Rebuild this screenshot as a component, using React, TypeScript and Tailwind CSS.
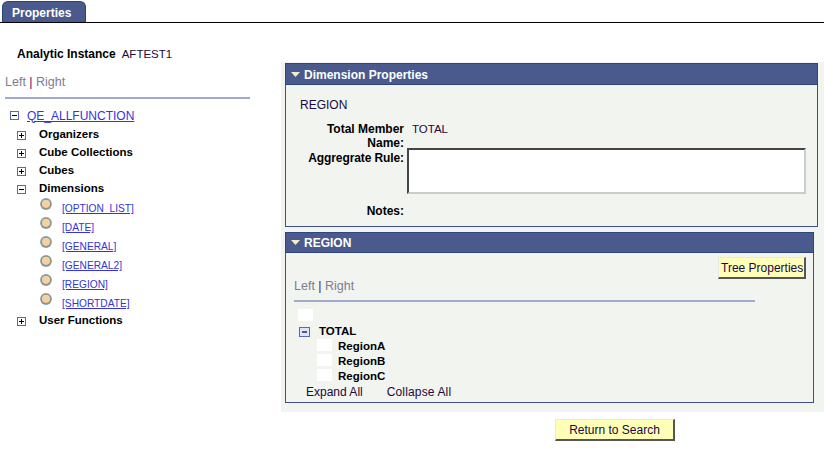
import React from 'react';

const font = { fontFamily: '"Liberation Sans", Arial, sans-serif' };

function TreeBox({ open, className = '' }: { open: boolean; className?: string }) {
  return (
    <svg width="9" height="9" viewBox="0 0 9 9" className={`block shrink-0 ${className}`}>
      <rect x="0.5" y="0.5" width="8" height="8" fill="#fff" stroke="#5a68ac" />
      <path d={open ? 'M2 4.5h5' : 'M2 4.5h5M4.5 2v5'} stroke="#000" fill="none" />
    </svg>
  );
}

function Ball() {
  return (
    <svg width="12" height="12" viewBox="0 0 12 12" className="block shrink-0">
      <circle cx="6" cy="6" r="5.9" fill="#7aa3bf" />
      <circle cx="6" cy="6" r="5" fill="#a88a5e" />
      <circle cx="6" cy="5.8" r="4.1" fill="#efd2a8" />
    </svg>
  );
}

function Branch({ label, open = false }: { label: string; open?: boolean }) {
  return (
    <div className="flex h-[18px] items-center pl-[17px]">
      <TreeBox open={open} />
      <span className="ml-[13px] text-[11.5px] font-bold text-black">{label}</span>
    </div>
  );
}

function Dim({ label }: { label: string }) {
  return (
    <div className="flex h-[19px] pl-[40px]">
      <Ball />
      <a className="ml-[10px] mt-[4px] text-[10.2px] leading-[13px] text-[#3434d8] underline">{label}</a>
    </div>
  );
}

function SectionHead({ title, className = '' }: { title: string; className?: string }) {
  return (
    <div className={`flex items-center border border-[#2f4480] bg-[#4a5a8c] pl-[5px] ${className}`}>
      <svg width="9" height="5" viewBox="0 0 9 5" className="block shrink-0">
        <path d="M0 0h9L4.5 5z" fill="#f4eec8" />
      </svg>
      <span className="ml-[4px] text-[12px] font-bold text-white">{title}</span>
    </div>
  );
}

function PsButton({ label, className = '' }: { label: string; className?: string }) {
  return (
    <button
      type="button"
      className={`flex h-[22px] items-center overflow-hidden whitespace-nowrap border border-t-[#e8e8e8] border-l-[#e8e8e8] border-r-[2px] border-b-[2px] border-r-[#555] border-b-[#555] bg-[#ffffb8] text-[12px] text-[#200840] ${className}`}
    >
      {label}
    </button>
  );
}

function LeftRight() {
  return (
    <div className="text-[12.5px] leading-[14px] text-[#7d7d92]">
      Left <span className="text-[#50106e]">|</span> Right
    </div>
  );
}

function Member({ label }: { label: string }) {
  return (
    <div className="flex h-[15px] items-center pl-[31px]">
      <div className="h-[12px] w-[15px] shrink-0 self-start bg-white" />
      <span className="ml-[6px] text-[11.5px] font-bold text-black">{label}</span>
    </div>
  );
}

export default function App() {
  return (
    <div style={font} className="h-[449px] w-[824px] overflow-hidden bg-white">
      {/* tab strip */}
      <div className="h-[23px] border-b border-black pl-[2px] pt-[1px]">
        <div className="flex h-[21px] w-[84px] items-center rounded-t-[6px] border border-b-0 border-[#2f3f70] bg-[#4a5a8c] pl-[9px] pt-[2px] text-[12px] font-bold text-white">
          Properties
        </div>
      </div>

      <div className="flex">
        {/* left tree */}
        <div className="w-[281px] shrink-0">
          <div className="flex items-center pl-[17px] pt-[24px]">
            <span className="text-[12px] font-bold leading-[14px] text-black">Analytic Instance</span>
            <span className="ml-[6px] text-[11.5px] leading-[14px] text-[#200840]">AFTEST1</span>
          </div>
          <div className="pl-[5px] pt-[14px]">
            <LeftRight />
          </div>
          <div className="ml-[5px] mt-[8px] h-[2px] w-[245px] bg-[#a2aacc]" />
          <div className="flex h-[20px] items-center pl-[10px] pt-[13px]">
            <TreeBox open />
            <a className="ml-[8px] text-[12px] text-[#3434d8] underline">QE_ALLFUNCTION</a>
          </div>
          <div className="pt-[7px]">
            <Branch label="Organizers" />
            <Branch label="Cube Collections" />
            <Branch label="Cubes" />
            <Branch label="Dimensions" open />
            <Dim label="[OPTION_LIST]" />
            <Dim label="[DATE]" />
            <Dim label="[GENERAL]" />
            <Dim label="[GENERAL2]" />
            <Dim label="[REGION]" />
            <Dim label="[SHORTDATE]" />
            <Branch label="User Functions" />
          </div>
        </div>

        {/* right panels */}
        <div className="mt-[39px] flex h-[350px] w-[543px] shrink-0 flex-col bg-[#f2f4f0] pl-[4px] pt-px">
          <div className="h-[164px] w-[533px] shrink-0 border-x border-b border-[#3f5088]">
            <div className="-mx-px">
              <SectionHead title="Dimension Properties" className="h-[22px] pt-px" />
            </div>
            <div className="pl-[14px] pt-[13px] text-[12px] leading-[14px] text-[#200840]">REGION</div>
            <div className="mt-[10px] flex">
              <div className="w-[118px] text-right text-[12px] font-bold leading-[14px] text-black">
                Total Member
                <br />
                Name:
              </div>
              <div className="ml-[8px] text-[11.5px] leading-[14px] text-[#200840]">TOTAL</div>
            </div>
            <div className="flex">
              <div className="w-[118px] pt-px text-right text-[12px] font-bold leading-[15px] tracking-[-0.1px] text-black">
                Aggregrate Rule:
              </div>
              <div className="ml-[3px] -mt-[2px] h-[46px] w-[399px] border-2 border-t-[#444] border-l-[#444] border-r-[#ccc] border-b-[#ccc] bg-white" />
            </div>
            <div className="flex pt-[10px]">
              <div className="w-[118px] text-right text-[12px] font-bold leading-[15px] text-black">Notes:</div>
            </div>
          </div>

          <div className="mt-[5px] h-[171px] w-[529px] shrink-0 border-x border-b border-[#3f5088]">
            <div className="-mx-px">
              <SectionHead title="REGION" className="h-[21px]" />
            </div>
            <div className="flex justify-end pr-[7px] pt-[4px]">
              <PsButton label="Tree Properties" className="w-[88px] pl-[2px] text-[12.5px]" />
            </div>
            <div className="pl-[8px]">
              <LeftRight />
            </div>
            <div className="ml-[8px] mt-[7px] h-[2px] w-[461px] bg-[#a2aacc]" />
            <div className="ml-[12px] mt-[7px] h-[12px] w-[15px] bg-white" />
            <div className="mt-[3px] flex h-[15px] items-center pl-[13px]">
              <svg width="11" height="10" viewBox="0 0 11 10" className="block shrink-0">
                <rect x="0.5" y="0.5" width="10" height="9" fill="#dfe4f7" stroke="#5a68ac" />
                <path d="M3 5h5" stroke="#26367a" strokeWidth="1.6" fill="none" />
              </svg>
              <span className="ml-[9px] text-[11.5px] font-bold text-black">TOTAL</span>
            </div>
            <Member label="RegionA" />
            <Member label="RegionB" />
            <Member label="RegionC" />
            <div className="flex pl-[20px] pt-[1px] text-[12px] leading-[14px] text-[#200840]">
              <span>Expand All</span>
              <span className="ml-[24px] tracking-[0.15px]">Collapse All</span>
            </div>
          </div>
        </div>
      </div>

      <div className="flex justify-end pr-[149px] pt-[7px]">
        <PsButton label="Return to Search" className="w-[120px] justify-center" />
      </div>
    </div>
  );
}
